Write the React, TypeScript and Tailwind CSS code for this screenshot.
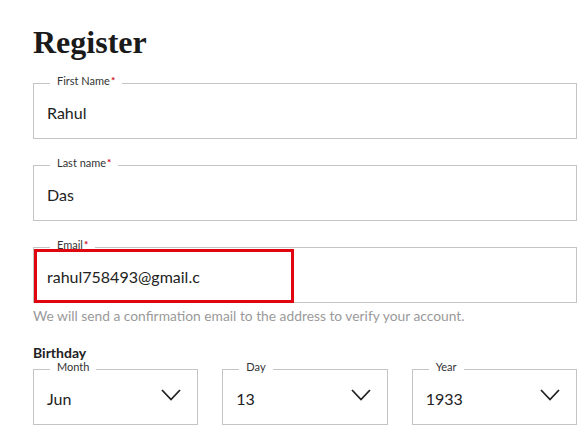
import React from "react";

const Chevron = () => (
  <svg width="20" height="12" viewBox="0 0 20 12" fill="none" className="mb-[7px] shrink-0">
    <path d="M1 1 L10 10.5 L19 1" stroke="#222" strokeWidth="1.8" />
  </svg>
);

function Field({ label, value, required = true, children }: { label: string; value: string; required?: boolean; children?: React.ReactNode }) {
  return (
    <div className="relative h-[56px] border border-[#c4c4c4] flex items-center pl-[13px] pt-[4px]">
      <span className="absolute -top-[10px] left-[16px] bg-white px-[7px] text-[11px] leading-[13px] text-[#333] whitespace-nowrap">
        {label}
        {required && <span className="text-[#d0021b] text-[10px] font-bold align-top ml-[1px]">*</span>}
      </span>
      <span className="text-[16px] text-[#222]">{value}</span>
      {children}
    </div>
  );
}

function SelectBox({ label, value }: { label: string; value: string }) {
  return (
    <div className="relative h-[56px] border border-[#c4c4c4] flex items-center justify-between pl-[13px] pr-[16px] pt-[3px]">
      <span className="absolute -top-[10px] left-[16px] bg-white px-[7px] text-[11px] leading-[13px] text-[#333] whitespace-nowrap">
        {label}
      </span>
      <span className="text-[16px] text-[#222]">{value}</span>
      <Chevron />
    </div>
  );
}

export default function App() {
  return (
    <div className="bg-white w-[588px] h-[427px] overflow-hidden pl-[33px] pr-[11px]" style={{ fontFamily: "Lato, 'Open Sans', sans-serif" }}>
      <h1 className="mt-[26px] h-[32px] leading-[32px] text-[32px] font-bold text-[#1a1a1a]" style={{ fontFamily: "'Liberation Serif', 'DejaVu Serif', serif" }}>
        Register
      </h1>
      <div className="mt-[25px] flex flex-col gap-[26px]">
        <Field label="First Name" value="Rahul" />
        <Field label="Last name" value="Das" />
        <Field label="Email" value="rahul758493@gmail.c">
          <div className="absolute left-[0px] top-[1px] w-[260px] h-[54px] border-[3px] border-[#e0060f]" />
        </Field>
      </div>
      <p className="mt-[3px] text-[13.8px] leading-[20px] text-[#9a9a9a]">
        We will send a confirmation email to the address to verify your account.
      </p>
      <p className="mt-[17px] text-[14px] leading-[20px] font-bold text-[#222]">Birthday</p>
      <div className="mt-[6px] grid grid-cols-3 gap-[24px]">
        <SelectBox label="Month" value="Jun" />
        <SelectBox label="Day" value="13" />
        <SelectBox label="Year" value="1933" />
      </div>
    </div>
  );
}
